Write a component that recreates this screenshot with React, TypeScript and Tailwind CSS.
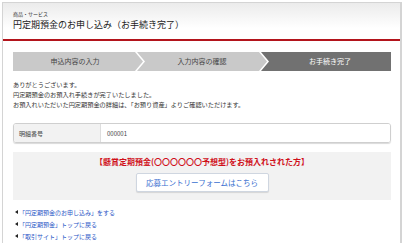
import React from "react";

const font = { fontFamily: '"Noto Sans CJK JP", "Noto Sans", sans-serif' };

function Step({ label, first, active }: { label: string; first?: boolean; active?: boolean }) {
  const clip = first
    ? "polygon(0 0, calc(100% - 8px) 0, 100% 50%, calc(100% - 8px) 100%, 0 100%)"
    : active
    ? "polygon(0 0, 100% 0, 100% 100%, 0 100%, 8px 50%)"
    : "polygon(0 0, calc(100% - 8px) 0, 100% 50%, calc(100% - 8px) 100%, 0 100%, 8px 50%)";
  return (
    <div
      className={`flex-1 h-[19px] flex items-center justify-center text-[7px] ${
        active ? "bg-[#717171] text-white -ml-[6px]" : first ? "bg-[#c9c9c9] text-[#444]" : "bg-[#c9c9c9] text-[#444] -ml-[6px]"
      }`}
      style={{ clipPath: clip }}
    >
      <span className={first ? "pr-[6px]" : active ? "pl-[8px]" : ""}>{label}</span>
    </div>
  );
}

function LinkItem({ text }: { text: string }) {
  return (
    <div className="flex items-center h-[12px] text-[6px] text-[#2a56c6]">
      <span className="inline-block w-0 h-0 border-y-[2.5px] border-y-transparent border-r-[3px] border-r-[#222] mr-[1px] ml-[2px]" />
      <span>{text}</span>
    </div>
  );
}

export default function App() {
  return (
    <div className="w-[404px] h-[243px] bg-white overflow-hidden" style={font}>
      <div className="ml-[2px] w-[400px] h-[243px] mt-[2px] border-l border-r-2 border-t border-[#d4d4d4]">
        <div className="h-[36px] bg-gradient-to-b from-[#ebebeb] to-white to-70% px-[10px] pt-[8px]">
          <div className="text-[5px] leading-[6px] text-[#333]">商品・サービス</div>
          <div className="text-[9px] leading-[12px] text-[#222] mt-[2px]">円定期預金のお申し込み（お手続き完了）</div>
        </div>
        <div className="h-[2px] bg-[#b3141c]" />
        <div className="pl-[10px] pr-[9px] pt-[11px]">
          <div className="flex">
            <Step label="申込内容の入力" first />
            <Step label="入力内容の確認" />
            <Step label="お手続き完了" active />
          </div>
          <div className="mt-[9px] text-[6.2px] leading-[10px] text-[#333]">
            <div>ありがとうございます。</div>
            <div>円定期預金のお預入れ手続きが完了いたしました。</div>
            <div>お預入れいただいた円定期預金の詳細は、「お預り資産」よりご確認いただけます。</div>
          </div>
          <div className="mt-[13px] h-[20px] flex rounded-[3px] border border-[#cfcfcf] shadow-[0_1px_1px_rgba(0,0,0,0.15)] overflow-hidden text-[6px] text-[#444]">
            <div className="w-[87px] bg-[#f2f2f2] border-r border-[#dedede] flex items-center pl-[5px]">明細番号</div>
            <div className="flex-1 bg-white flex items-center pl-[6px]">000001</div>
          </div>
          <div className="mt-[9px] h-[48px] bg-[#f2f2f2] flex flex-col items-center pt-[4px]">
            <div className="text-[8px] leading-[11px] font-bold text-[#d0101a]">【懸賞定期預金(〇〇〇〇〇〇予想型)をお預入れされた方】</div>
            <div className="mt-[6px] w-[133px] h-[19px] bg-white border border-[#cfd6e0] rounded-[2px] shadow-[0_1px_1px_rgba(0,0,0,0.12)] flex items-center justify-center text-[7.5px] text-[#3a6fd0]">
              応募エントリーフォームはこちら
            </div>
          </div>
          <div className="mt-[6px]">
            <LinkItem text="「円定期預金のお申し込み」をする" />
            <LinkItem text="「円定期預金」トップに戻る" />
            <LinkItem text="「取引サイト」トップに戻る" />
          </div>
        </div>
      </div>
    </div>
  );
}
